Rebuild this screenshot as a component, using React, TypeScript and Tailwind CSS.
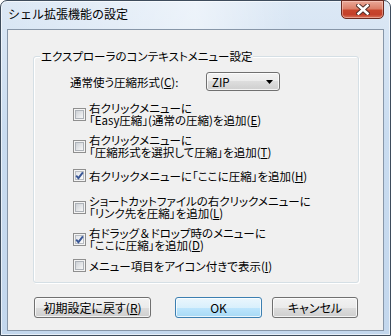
import { ReactNode } from 'react';

const jp = "font-['Noto_Sans_CJK_JP','Noto_Sans_CJK_SC',sans-serif]";

function CheckBox({ checked }: { checked?: boolean }) {
  return (
    <span className="relative w-[13px] h-[13px] shrink-0 border border-[#8f8f8f] bg-[#f4f4f4] flex items-center justify-center">
      <span
        className={
          checked
            ? 'w-[9px] h-[9px] border border-[#b9bdc3] bg-[linear-gradient(135deg,#e2e5ea,#fbfbfb)]'
            : 'w-[9px] h-[9px] border border-[#adb2b8] bg-[linear-gradient(135deg,#cdd1d6,#f7f7f7)]'
        }
      />
      {checked && (
        <svg className="absolute left-0 top-0" width="11" height="11" viewBox="0 0 11 11">
          <path d="M2.2 5.6 L4.4 8.2 L8.9 2.3" fill="none" stroke="#3a5796" strokeWidth="1.9" />
        </svg>
      )}
    </span>
  );
}

function Key({ k }: { k: string }) {
  return (
    <>
      (<span className="underline">{k}</span>)
    </>
  );
}

type Item = { lines: ReactNode[]; checked?: boolean; mt: string };

const items: Item[] = [
  { lines: ['右クリックメニューに', <>「Easy圧縮」(通常の圧縮)を追加<Key k="E" /></>], mt: 'mt-[11px]' },
  { lines: ['右クリックメニューに', <>「圧縮形式を選択して圧縮」を追加<Key k="T" /></>], mt: 'mt-[8px]' },
  { lines: [<>右クリックメニューに「ここに圧縮」を追加<Key k="H" /></>], checked: true, mt: 'mt-[11px]' },
  { lines: ['ショートカットファイルの右クリックメニューに', <>「リンク先を圧縮」を追加<Key k="L" /></>], mt: 'mt-[13px]' },
  {
    lines: [<>右ドラッグ<span className="[font-feature-settings:normal]">＆</span>ドロップ時のメニューに</>, <>「ここに圧縮」を追加<Key k="D" /></>],
    checked: true,
    mt: 'mt-[8px]',
  },
  { lines: [<>メニュー項目をアイコン付きで表示<Key k="I" /></>], mt: 'mt-[8px]' },
];

function Button({ children, primary, w }: { children: ReactNode; primary?: boolean; w: string }) {
  return (
    <button
      className={
        (primary
          ? 'border-[#3c7fb1] bg-[linear-gradient(#eaf6fd_0%,#d9f0fc_50%,#bee6fd_50%,#a7d9f5_100%)] '
          : 'border-[#707070] bg-[linear-gradient(#f2f2f2_0%,#ebebeb_50%,#dddddd_50%,#cfcfcf_100%)] ') +
        w +
        ' h-[21px] rounded-[3px] border shadow-[inset_0_0_0_1px_rgba(255,255,255,0.75)] text-[12px] leading-[12px] text-black flex items-center justify-center'
      }
    >
      {children}
    </button>
  );
}

export default function App() {
  return (
    <div className={`${jp} w-[391px] h-[336px] flex flex-col border border-[#3e4c5c] rounded-t-[7px] bg-[linear-gradient(#dce8f5,#c9dcf0_40%,#c3d7ed)] shadow-[inset_0_0_0_1px_rgba(255,255,255,0.6)] text-black`}>
      {/* title bar */}
      <div className="h-[28px] flex items-start justify-between bg-[linear-gradient(to_right,transparent,rgba(255,255,255,0.35)_35%,rgba(255,255,255,0.5)_50%,transparent_75%)]">
        <span className="ml-[7px] mt-[6px] text-[12px] leading-[13px] text-black">シェル拡張機能の設定</span>
        <div className="-mt-[1px] mr-[6px] w-[43px] h-[19px] rounded-b-[5px] border border-[#6b2a20] bg-[linear-gradient(#eaa898_0%,#dc7f69_45%,#c8452c_55%,#c4402a_80%,#d9745b_100%)] shadow-[inset_0_0_0_1px_rgba(255,220,210,0.45)] flex items-center justify-center">
          <svg width="14" height="11" viewBox="0 0 14 11">
            <path d="M2.5 1.5 L11.5 9.5 M11.5 1.5 L2.5 9.5" stroke="#4a2a26" strokeWidth="4.4" strokeLinecap="square" />
            <path d="M2.5 1.5 L11.5 9.5 M11.5 1.5 L2.5 9.5" stroke="#ffffff" strokeWidth="2.6" strokeLinecap="square" />
          </svg>
        </div>
      </div>

      {/* client area */}
      <div className="mx-[6px] h-[302px] border border-[#8796a8] bg-[#f0f0f0] [font-feature-settings:'palt'] text-[11.5px] leading-[12px]">
        <div className="relative ml-[25px] mr-[24px] mt-[26px] h-[227px] border border-[#d5dfe5] rounded-[3px] shadow-[inset_1px_1px_0_#ffffff,1px_1px_0_#ffffff]">
          <span className="absolute left-[6px] -top-[7px] px-[1px] bg-[#f0f0f0] leading-[12px]">
            エクスプローラのコンテキストメニュー設定
          </span>

          <div className="mt-[15px] ml-[36px] flex items-center h-[19px]">
            <span className="w-[136px]">
              通常使う圧縮形式<Key k="C" />:
            </span>
            <div className="w-[74px] h-[19px] rounded-[3px] border border-[#707070] bg-[linear-gradient(#f2f2f2_0%,#ebebeb_50%,#dddddd_50%,#cfcfcf_100%)] shadow-[inset_0_0_0_1px_rgba(255,255,255,0.75)] flex items-center justify-between pl-[5px] pr-[6px]">
              <span>ZIP</span>
              <svg width="7" height="4" viewBox="0 0 7 4">
                <path d="M0 0 L7 0 L3.5 4 Z" fill="#000" />
              </svg>
            </div>
          </div>

          {items.map((it, i) => (
            <div key={i} className={`${it.mt} ml-[39px] flex items-center gap-[3px]`}>
              <CheckBox checked={it.checked} />
              <div className="flex flex-col whitespace-nowrap">
                {it.lines.map((l, j) => (
                  <span key={j} className="h-[12px] leading-[12px]">
                    {l}
                  </span>
                ))}
              </div>
            </div>
          ))}
        </div>

        <div className="mt-[14px] ml-[26px] flex">
          <Button w="w-[117px]">
            初期設定に戻す<Key k="R" />
          </Button>
          <div className="ml-[24px]">
            <Button w="w-[87px]" primary>
              OK
            </Button>
          </div>
          <div className="ml-[10px]">
            <Button w="w-[86px]">キャンセル</Button>
          </div>
        </div>
      </div>
    </div>
  );
}
